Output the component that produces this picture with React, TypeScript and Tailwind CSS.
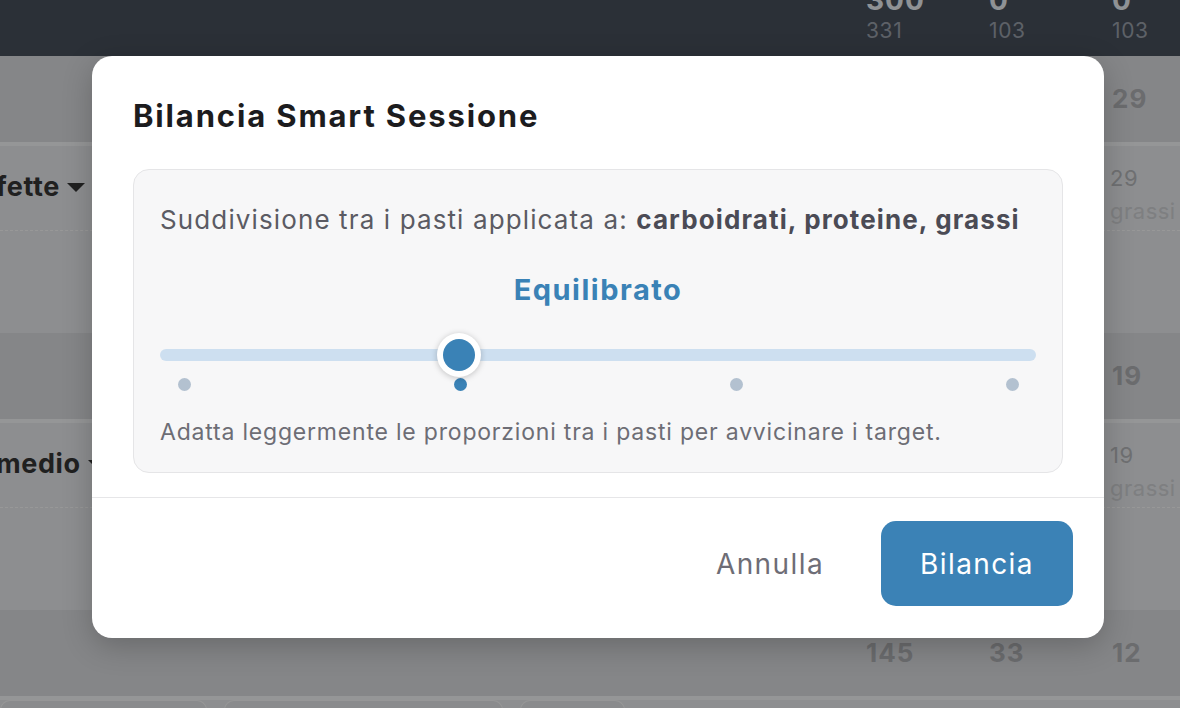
import React from "react";

// background table: three value columns starting at x 866 / 989 / 1112
function NumRow({
  left,
  cols,
  className = "",
}: {
  left?: React.ReactNode;
  cols: React.ReactNode[];
  className?: string;
}) {
  return (
    <div className={`flex ${className}`}>
      <div className="flex w-[866px] shrink-0 items-center">{left}</div>
      {cols.map((c, i) => (
        <div key={i} className="w-[123px] shrink-0">
          {c}
        </div>
      ))}
    </div>
  );
}

function Caret() {
  return (
    <svg width="18" height="9" viewBox="0 0 18 9" className="shrink-0">
      <path d="M0 0h18L9 9z" fill="currentColor" />
    </svg>
  );
}

function Summary({ values }: { values: string[] }) {
  return (
    <NumRow
      className="h-[86px] items-center bg-[#dedfe3]"
      cols={values.map((v) => (
        <span className="text-[26px] font-bold leading-[32px] tracking-[1px] text-[#b3b4b8]">{v}</span>
      ))}
    />
  );
}

function Group({ label, values, grams }: { label: string; values: string[]; grams: string }) {
  return (
    <div>
      <Summary values={values} />
      <div className="h-[4px] bg-[#f9fafc]" />
      <NumRow
        className="h-[85px] border-b border-dashed border-[#fdfdfd]"
        left={
          <div className="-ml-[4px] flex items-center gap-[7px] pb-[2px] text-[27px] font-bold tracking-[0.6px] text-[#363636]">
            <span>{label}</span>
            <Caret />
          </div>
        }
        cols={[
          <span />,
          <span />,
          <div className="-ml-[2px] pt-[19px]">
            <div className="text-[22px] leading-[26px] tracking-[0.5px] text-[#b9bbbe]">{grams}</div>
            <div className="mt-[7px] text-[22px] leading-[26px] tracking-[0.5px] text-[#d2d4d7]">grassi</div>
          </div>,
        ]}
      />
      <div className="h-[102px]" />
    </div>
  );
}

function Slider() {
  return (
    <div className="mt-[26px]">
      <div className="relative h-[44px]">
        <div className="absolute inset-x-0 top-[16px] h-[12px] rounded-full bg-[#cddff0]" />
        <div className="absolute left-[277px] top-0 flex h-[44px] w-[44px] items-center justify-center rounded-full bg-white shadow-[0_1px_6px_rgba(0,0,0,0.22)]">
          <div className="h-[32px] w-[32px] rounded-full bg-[#3a82b6]" />
        </div>
      </div>
      <div className="mt-[1px] flex justify-between px-[17.5px]">
        <span className="h-[13px] w-[13px] rounded-full bg-[#b3c1d0]" />
        <span className="h-[13px] w-[13px] rounded-full bg-[#3a82b6]" />
        <span className="h-[13px] w-[13px] rounded-full bg-[#b3c1d0]" />
        <span className="h-[13px] w-[13px] rounded-full bg-[#b3c1d0]" />
      </div>
    </div>
  );
}

export default function App() {
  return (
    <div className="relative h-[708px] w-[1180px] overflow-hidden bg-[#ebedf0] font-[Inter,'Noto_Sans',sans-serif]">
      {/* header totals */}
      <div className="h-[56px] overflow-hidden bg-[#48505d]">
        <NumRow
          cols={[
            ["300", "331"],
            ["0", "103"],
            ["0", "103"],
          ].map(([big, small]) => (
            <div>
              <div className="-mt-[16px] text-[28px] font-bold leading-[32px] tracking-[1px] text-[#eff3f8]">{big}</div>
              <div className="mt-[3px] text-[21px] leading-[24px] tracking-[0.6px] text-[#9ba2ac]">{small}</div>
            </div>
          ))}
        />
      </div>

      <Group label="fette" values={["310", "41", "29"]} grams="29" />
      <Group label="medio" values={["186", "62", "19"]} grams="19" />
      <Summary values={["145", "33", "12"]} />
      <div className="h-[4px] bg-[#f9fafc]" />
      <div className="flex gap-[17px]">
        <div className="h-[10px] w-[207px] rounded-t-[10px] border border-b-0 border-[#fbfbfc] bg-[#e6e8eb]" />
        <div className="h-[10px] w-[279px] rounded-t-[10px] border border-b-0 border-[#fbfbfc] bg-[#e6e8eb]" />
        <div className="h-[10px] w-[105px] rounded-t-[10px] border border-b-0 border-[#fbfbfc] bg-[#e6e8eb]" />
      </div>

      {/* dialog */}
      <div className="absolute inset-0 flex items-start bg-black/40 pl-[92px] pt-[56px]">
        <div className="w-[1012px] rounded-[20px] bg-white shadow-[0_8px_30px_rgba(0,0,0,0.22)]">
          <div className="px-[41px] pb-[24px] pt-[42px]">
            <h2 className="text-[31px] font-bold leading-[36px] tracking-[1.85px] text-[#1c1c1e]">Bilancia Smart Sessione</h2>
            <div className="mt-[35px] rounded-[16px] border border-[#e5e5e7] bg-[#f7f7f8] px-[26px] pb-[25px] pt-[34px]">
              <p className="text-[26px] leading-[32px] tracking-[1.12px] text-[#5b5b63]">
                Suddivisione tra i pasti applicata a:{" "}
                <span className="font-bold text-[#4b4b55]">carboidrati, proteine, grassi</span>
              </p>
              <p className="mt-[37px] text-center text-[29px] font-bold leading-[34px] tracking-[1.5px] text-[#3a82b6]">Equilibrato</p>
              <Slider />
              <p className="mt-[26px] text-[23px] leading-[30px] tracking-[0.8px] text-[#6d6d75]">
                Adatta leggermente le proporzioni tra i pasti per avvicinare i target.
              </p>
            </div>
          </div>
          <div className="flex items-center justify-end gap-[57px] border-t border-[#e6e6e8] pb-[32px] pr-[31px] pt-[23px]">
            <button className="text-[28px] leading-[34px] tracking-[1.4px] text-[#6e6d76]">Annulla</button>
            <button className="h-[85px] w-[192px] rounded-[15px] bg-[#3b82b6] text-[28px] tracking-[1.4px] text-white">Bilancia</button>
          </div>
        </div>
      </div>
    </div>
  );
}
